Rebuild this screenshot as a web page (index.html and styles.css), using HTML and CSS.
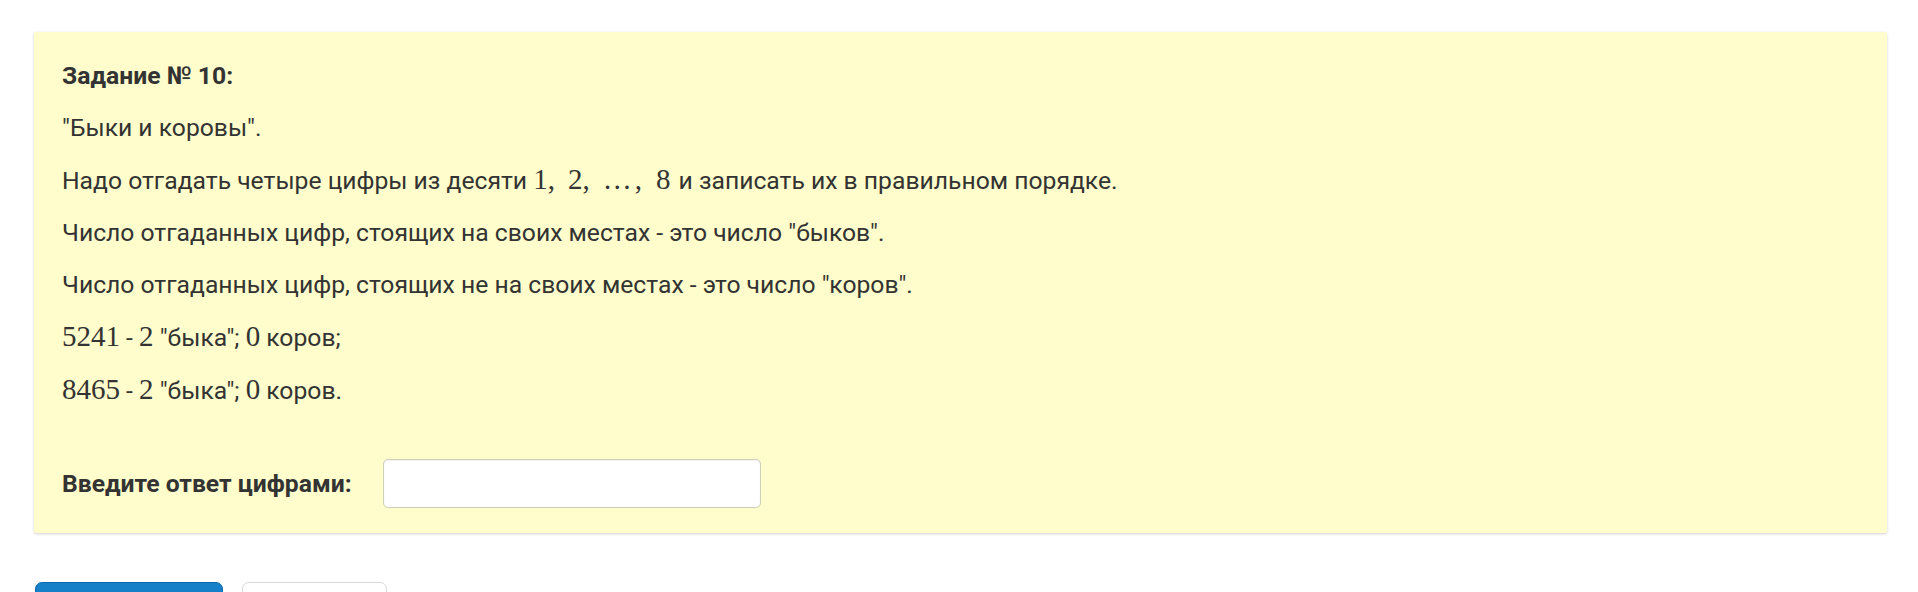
FILE: index.html
```html
<!DOCTYPE html>
<html lang="ru">
<head>
<meta charset="utf-8">
<link rel="stylesheet" href="styles.css">
</head>
<body>
<div class="page">
  <div class="task">
    <p class="title">Задание № 10:</p>
    <p>"Быки и коровы".</p>
    <p>Надо отгадать четыре цифры из десяти <span class="math"><span class="mi">1,</span><span class="mi">2,</span><span class="mi dots">…,</span><span class="mi last">8</span></span> и записать их в правильном порядке.</p>
    <p>Число отгаданных цифр, стоящих на своих местах - это число "быков".</p>
    <p>Число отгаданных цифр, стоящих не на своих местах - это число "коров".</p>
    <p><span class="math">5241</span> - <span class="math">2</span> "быка"; <span class="math">0</span> коров;</p>
    <p><span class="math">8465</span> - <span class="math">2</span> "быка"; <span class="math">0</span> коров.</p>
    <div class="answer">
      <label class="label">Введите ответ цифрами:</label>
      <input class="field" type="text">
    </div>
  </div>
  <div class="buttons">
    <button class="btn primary" aria-label="Проверить"></button>
    <button class="btn secondary" aria-label="Сброс"></button>
  </div>
</div>
</body>
</html>
```

FILE: styles.css
```css
html, body {
  margin: 0;
  padding: 0;
  background: #ffffff;
}
body {
  font-family: Roboto, "Liberation Sans", sans-serif;
  font-size: 24.7px;
  color: #333333;
  overflow: hidden;
}
.page {
  padding: 32px 31px 0 34px;
}
.task {
  background: #fefdcb;
  padding: 28px 28px 25px 28px;
  box-shadow: 0 1px 3px rgba(0, 0, 0, 0.18);
  border-radius: 2px;
}
.task p {
  margin: 0 0 21px 0;
  line-height: 31px;
}
.title {
  font-weight: 700;
}
.math {
  font-family: "Liberation Serif", "DejaVu Serif", serif;
  font-size: 29px;
}
.mi {
  margin-right: 13px;
}
.mi.dots {
  letter-spacing: 3px;
  margin-right: 11px;
}
.mi.last {
  margin-right: 2px;
}
.answer {
  display: flex;
  align-items: center;
  gap: 31px;
  margin-top: 53px;
}
.label {
  font-weight: 700;
}
.field {
  width: 378px;
  height: 49px;
  box-sizing: border-box;
  border: 1px solid #cfcfb8;
  border-radius: 5px;
  background: #ffffff;
  box-shadow: inset 0 1px 2px rgba(0, 0, 0, 0.06);
}
.buttons {
  display: flex;
  gap: 19px;
  margin-top: 49px;
  padding-left: 1px;
}
.btn {
  height: 48px;
  border-radius: 7px;
}
.primary {
  width: 188px;
  background: #1580c8;
  border: 1px solid #0a6aad;
}
.secondary {
  width: 145px;
  background: #ffffff;
  border: 1px solid #d8d8d8;
}
```
